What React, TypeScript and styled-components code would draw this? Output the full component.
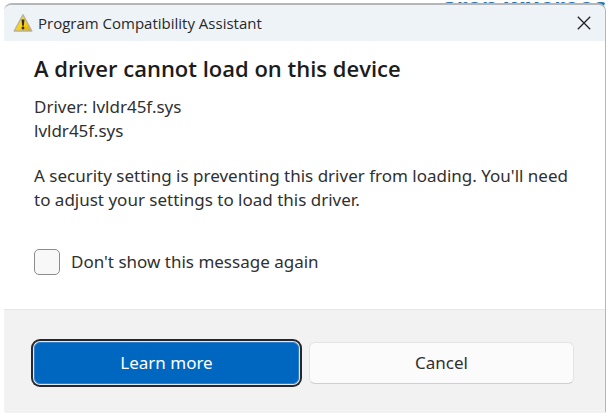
import React from "react";
import styled, { createGlobalStyle } from "styled-components";

const GlobalStyle = createGlobalStyle`
  *, *::before, *::after { box-sizing: border-box; }
  html, body, #root { height: 100%; }
  body {
    margin: 0;
    background: #fff;
    color: #303030;
    font: 17px/24px "Noto Sans", "Open Sans", sans-serif;
  }
`;

const Desktop = styled.main`
  position: relative;
  min-height: 100%;
  padding: 3px 4px 5px;
  display: flex;
  overflow: hidden;
`;

const BackgroundText = styled.span`
  position: absolute;
  top: -6px;
  right: 4px;
  color: #2a72ac;
  font-size: 24px;
  line-height: 24px;
  font-weight: 700;
  white-space: nowrap;
`;

const Dialog = styled.section`
  position: relative;
  flex: 1;
  display: flex;
  flex-direction: column;
  overflow: hidden;
  border: solid #b4b6b8;
  border-width: 2px 1px 0 0;
  border-radius: 8px 8px 2px 2px;
  background: #fff;
`;

const TitleBar = styled.header`
  display: flex;
  align-items: center;
  gap: 5px;
  height: 36px;
  padding: 0 12px 0 9px;
  background: #eef3f8;
`;

const Title = styled.span`
  flex: 1;
  color: #26282a;
  font-family: "Open Sans", "Noto Sans", sans-serif;
  font-size: 15px;
  line-height: 20px;
`;

const CloseButton = styled.button`
  display: flex;
  padding: 2px;
  border: 0;
  background: none;
  color: #222;
`;

const Content = styled.div`
  flex: 1;
  padding: 12px 30px 0;
`;

const Heading = styled.h1`
  margin: 0 0 12px;
  color: #1c1c1c;
  font-family: "Open Sans", "Noto Sans", sans-serif;
  font-size: 22px;
  line-height: 30px;
  font-weight: 600;
`;

const Paragraph = styled.p`
  margin: 0 0 21px;
`;

const CheckLabel = styled.label`
  display: flex;
  align-items: center;
  gap: 11px;
  margin-top: 37px;
`;

const CheckBox = styled.input`
  appearance: none;
  width: 26px;
  height: 26px;
  margin: 0;
  border: 1px solid #8c8c8c;
  border-radius: 5px;
  background: #f8f8f8;
  &:checked { background: #0067c0; }
`;

const Footer = styled.footer`
  display: grid;
  grid-template-columns: 1fr 1fr;
  gap: 10px;
  padding: 32px 31px 29px 30px;
  border-top: 1px solid #e6e6e6;
  background: #f2f2f2;
`;

const Button = styled.button<{ $primary?: boolean }>`
  height: 42px;
  padding: 0;
  border: 1px solid ${(p) => (p.$primary ? "#2f7fca" : "#e4e4e4")};
  border-bottom-color: ${(p) => (p.$primary ? "#2f7fca" : "#cfcfcf")};
  border-radius: 6px;
  background: ${(p) => (p.$primary ? "#0067c0" : "#fbfbfb")};
  color: ${(p) => (p.$primary ? "#fff" : "#303030")};
  font: inherit;
  box-shadow: ${(p) => (p.$primary ? "0 0 0 1px #dce8f4, 0 0 0 3px #28282c" : "none")};
`;

const WarningIcon = () => (
  <svg width="20" height="20" viewBox="0 0 20 20" aria-hidden="true">
    <defs>
      <linearGradient id="warning" x1="0" y1="0" x2="1" y2="1">
        <stop offset="0" stopColor="#ffe95a" />
        <stop offset="0.6" stopColor="#f7cf13" />
        <stop offset="1" stopColor="#dc9f10" />
      </linearGradient>
    </defs>
    <path d="M10 1.8 18.8 18H1.2Z" fill="url(#warning)" stroke="#b9b39c" strokeWidth="1.4" strokeLinejoin="round" />
    <path d="M8.5 6.5h3l-.7 6.3H9.2Z" fill="#302d1b" />
    <circle cx="10" cy="15" r="1.4" fill="#302d1b" />
  </svg>
);

const CloseIcon = () => (
  <svg width="14" height="14" viewBox="0 0 14 14" aria-hidden="true">
    <path d="M.8.8l12.4 12.4M13.2.8.8 13.2" stroke="currentColor" strokeWidth="1.3" />
  </svg>
);

export default function App() {
  return (
    <>
      <GlobalStyle />
      <Desktop>
        <BackgroundText aria-hidden="true">aron wuereos</BackgroundText>
        <Dialog role="dialog" aria-labelledby="heading">
          <TitleBar>
            <WarningIcon />
            <Title>Program Compatibility Assistant</Title>
            <CloseButton type="button" aria-label="Close"><CloseIcon /></CloseButton>
          </TitleBar>
          <Content>
            <Heading id="heading">A driver cannot load on this device</Heading>
            <Paragraph>Driver: lvldr45f.sys<br />lvldr45f.sys</Paragraph>
            <Paragraph>
              A security setting is preventing this driver from loading. You'll need to adjust your settings to load this driver.
            </Paragraph>
            <CheckLabel>
              <CheckBox type="checkbox" />
              Don't show this message again
            </CheckLabel>
          </Content>
          <Footer>
            <Button type="button" $primary>Learn more</Button>
            <Button type="button">Cancel</Button>
          </Footer>
        </Dialog>
      </Desktop>
    </>
  );
}
